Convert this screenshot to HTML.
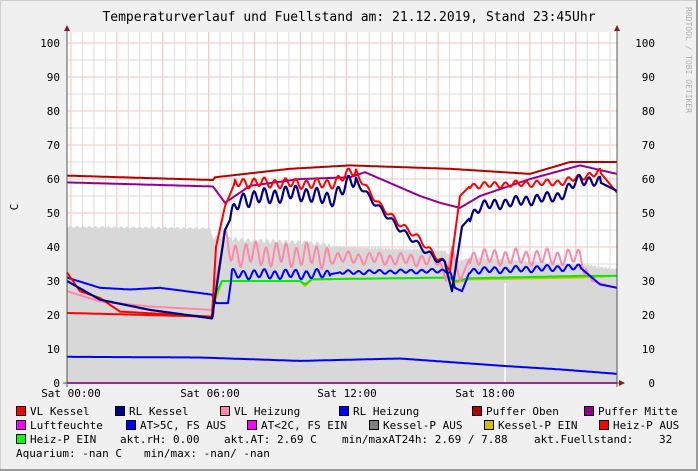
<!DOCTYPE html>
<html><head><meta charset="utf-8"><style>
body{margin:0;width:698px;height:471px;overflow:hidden;background:#f0f0f0}
svg{display:block}
text{font-family:"DejaVu Sans Mono","Liberation Mono",monospace;font-size:11px;fill:#000;white-space:pre}
</style></head><body>
<svg id="s" width="698" height="471" xmlns="http://www.w3.org/2000/svg">
<rect x="0" y="0" width="698" height="471" fill="#f0f0f0"/>
<rect x="0.5" y="0.5" width="696" height="469" fill="none" stroke="#cfcfcf"/>
<line x1="697" y1="0" x2="697" y2="471" stroke="#9a9a9a" stroke-width="2"/>
<line x1="0" y1="470" x2="698" y2="470" stroke="#9a9a9a" stroke-width="2"/>
<rect x="67" y="32" width="550" height="351" fill="#fff"/>
<g id="grid"></g>
<g id="data"></g>
<line x1="67" y1="26" x2="67" y2="387" stroke="#555"/>
<line x1="617" y1="26" x2="617" y2="387" stroke="#555"/>
<line x1="63" y1="383" x2="622" y2="383" stroke="#555"/>
<polygon points="64,31 70,31 67,25" fill="#8b1a1a"/>
<polygon points="614,31 620,31 617,25" fill="#8b1a1a"/>
<polygon points="619,380 619,386 625,383" fill="#8b1a1a"/>
<text x="349" y="21" text-anchor="middle" style="font-size:13px">Temperaturverlauf und Fuellstand am: 21.12.2019, Stand 23:45Uhr</text>
<text x="18" y="207" text-anchor="middle" transform="rotate(-90 18 207)">C</text>
<text x="686" y="7" transform="rotate(90 686 7)" style="font-size:8px;fill:#b0b0b0">RRDTOOL / TOBI OETIKER</text>
<g id="lab"></g>
<g id="leg"></g>
</svg>
<script>
const NS="http://www.w3.org/2000/svg";
function el(p,t,a,txt){const e=document.createElementNS(NS,t);for(const k in a)e.setAttribute(k,a[k]);if(txt!==undefined)e.textContent=txt;document.getElementById(p).appendChild(e);return e;}
const Y=v=>383-3.4*v;
for(let x=67+4;x<=617;x+=11.47){el("grid","line",{x1:x,y1:32,x2:x,y2:383,stroke:"#dcdcdc"});}
for(let v=5;v<=103;v+=10){el("grid","line",{x1:67,y1:Y(v),x2:617,y2:Y(v),stroke:"#dcdcdc"});}
for(let i=0;i<12;i++){const x=71+45.9*i;el("grid","line",{x1:x,y1:32,x2:x,y2:383,stroke:"#f4c4c4"});}
for(let v=10;v<=100;v+=10){el("grid","line",{x1:67,y1:Y(v),x2:617,y2:Y(v),stroke:"#f4c4c4"});
 el("lab","text",{x:60,y:Y(v)+4,"text-anchor":"end"},v);el("lab","text",{x:655,y:Y(v)+4,"text-anchor":"end"},v);}
el("lab","text",{x:60,y:387,"text-anchor":"end"},0);el("lab","text",{x:655,y:387,"text-anchor":"end"},0);
[["Sat 00:00",71],["Sat 06:00",210],["Sat 12:00",347],["Sat 18:00",485]].forEach(a=>el("lab","text",{x:a[1],y:397,"text-anchor":"middle"},a[0]));
function interp(k,x){for(let i=0;i<k.length-1;i++){if(x>=k[i][0]&&x<=k[i+1][0]){const t=(x-k[i][0])/(k[i+1][0]-k[i][0]||1);return k[i][1]+t*(k[i+1][1]-k[i][1]);}}return k[k.length-1][1];}
function osc(x,ranges){for(const r of ranges){if(x>=r[0]&&x<=r[1])return r[2]*Math.sin(x*r[3])+r[2]*0.3*Math.sin(x*r[3]*0.37);}return 0;}
function series(k,ranges,x0,x1){let p="";for(let x=x0;x<=x1;x+=1){const v=interp(k,x)+osc(x,ranges||[]);p+=(p?"L":"M")+x+","+Y(v).toFixed(1);}return p;}
function line(k,col,r,x0,x1,w){el("data","path",{d:series(k,r,x0||67,x1||617),fill:"none",stroke:col,"stroke-width":w||2,"stroke-linejoin":"round"});}
let g="M67,383";for(let x=67;x<=617;x++){let v=interp([[67,46],[210,45.5],[214,42],[250,41],[300,40.5],[350,39.5],[445,38.5],[455,35],[470,36.5],[520,35.5],[580,34.5],[617,33]],x);if(x>214&&x<330)v+=1.5*Math.abs(Math.sin(x*0.5));else if(x>=330)v+=0.7*Math.abs(Math.sin(x*0.9));else v+=0.3*Math.sin(x);g+="L"+x+","+Y(v).toFixed(1);}g+="L617,383Z";
el("data","path",{d:g,fill:"#d8d8d8"});
el("data","line",{x1:505,y1:283,x2:505,y2:383,stroke:"#fff","stroke-width":1.5});
line([[67,0],[617,0]],"#e000e0",null,67,617,2);
line([[67,7.7],[200,7.5],[300,6.5],[400,7.2],[505,5],[560,4],[617,2.7]],"#0000ff",null,67,617,2);
line([[67,20.6],[213,19.5],[214,24]],"#ff0000",null,67,214,2);
line([[215,24],[222,30],[300,30],[305,28.5],[312,30.5],[450,31],[455,29.5],[470,30.5],[580,31],[617,31.5]],"#d0c000",null,215,617,2);
line([[214,25],[222,30],[300,30],[305,29],[312,30.5],[450,31],[455,30],[470,30.8],[580,31.5],[617,31.5]],"#00ee00",null,214,617,2);
line([[67,27],[100,24],[150,22.5],[212,21.5],[216,30],[224,42],[232,38],[320,37.5],[330,37],[440,36],[446,30],[452,40],[460,30],[470,37],[580,37],[592,30],[617,28]],"#ff88aa",[[224,330,3,0.62],[330,440,1.5,0.6],[470,585,2,0.6]],67,617,2);
line([[67,31],[100,28],[130,27.5],[160,28],[212,26],[216,23.5],[228,23.5],[232,32],[330,32],[340,32.5],[450,33],[455,28],[462,27],[470,33],[580,34],[600,29],[617,28]],"#0000ff",[[232,330,1.2,0.6],[340,450,0.5,0.6],[470,580,0.8,0.6]],67,617,2);
line([[67,61],[213,59.7],[215,60.5],[290,63],[350,64],[450,63],[530,61.5],[570,65],[617,65]],"#b00000",null,67,617,2);
line([[67,59],[213,57.8],[225,53],[250,58],[300,60],[350,60.5],[365,62],[420,55],[440,53],[460,51.5],[480,55],[530,60],[580,64],[617,61.5]],"#900090",null,67,617,2);
line([[67,32.5],[80,27],[100,25],[120,21],[212,19.5],[216,40],[225,52],[235,59],[330,58.5],[355,62.5],[380,52],[420,42],[445,35],[450,33],[460,55],[470,58],[560,59],[600,62],[617,56]],"#ff0000",[[235,355,1.3,0.6],[355,445,0.8,0.5],[470,600,0.8,0.6]],67,617,2);
line([[67,30],[100,24.5],[150,21.5],[212,19],[225,45],[240,54],[300,56],[330,54],[355,60],[380,51],[420,40],[445,35],[452,27],[462,46],[480,52],[560,55],[580,60],[600,59],[617,56.5]],"#000080",[[230,355,2,0.6],[355,445,0.8,0.5],[470,600,1.3,0.6]],67,617,2.2);
const rows=[
[[16,"#ff0000","VL Kessel"],[115,"#000080","RL Kessel"],[220,"#ff88aa","VL Heizung"],[339,"#0000ff","RL Heizung"],[472,"#b00000","Puffer Oben"],[584,"#900090","Puffer Mitte"]],
[[16,"#ff00ff","Luftfeuchte"],[126,"#0000ff","AT>5C, FS AUS"],[247,"#ff00ff","AT<2C, FS EIN"],[369,"#808080","Kessel-P AUS"],[484,"#d0c000","Kessel-P EIN"],[599,"#ff0000","Heiz-P AUS"]],
[[16,"#00ff00","Heiz-P EIN"]]];
rows.forEach((r,i)=>{const y=415+i*14;r.forEach(a=>{el("leg","rect",{x:a[0]+0.5,y:y-8.5,width:9,height:9,fill:a[1],stroke:"#000"});el("leg","text",{x:a[0]+14,y:y},a[2]);});});
[["akt.rH: 0.00",120],["akt.AT: 2.69 C",224],["min/maxAT24h: 2.69 / 7.88",342],["akt.Fuellstand:",534],["32",659]].forEach(a=>el("leg","text",{x:a[1],y:443},a[0]));
[["Aquarium: -nan C",16],["min/max: -nan/ -nan",144]].forEach(a=>el("leg","text",{x:a[1],y:457},a[0]));
</script>
</body></html>
